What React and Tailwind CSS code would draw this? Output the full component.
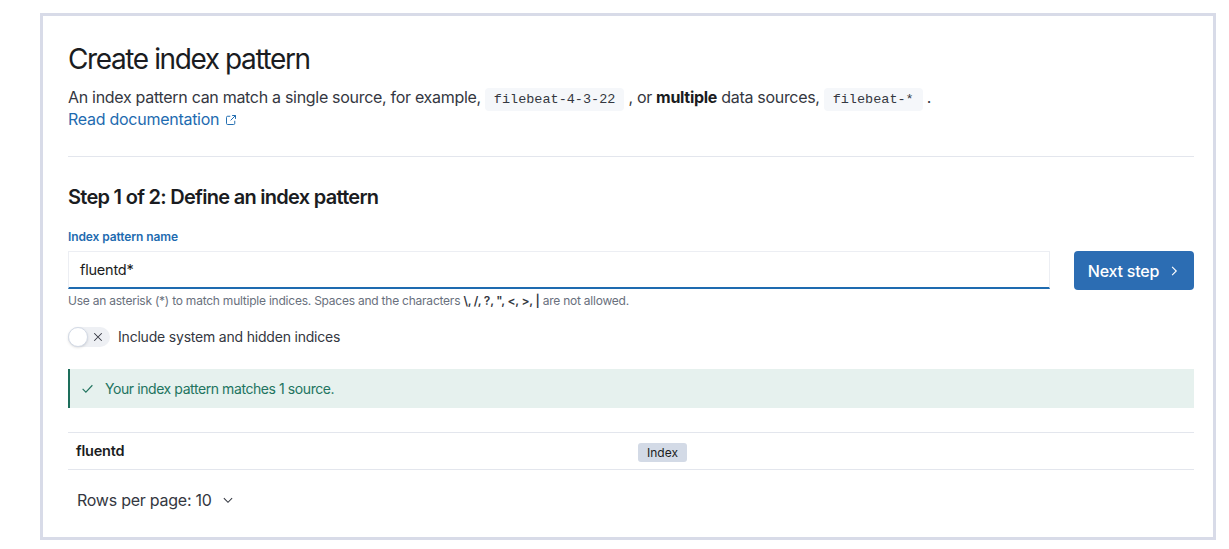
import React from 'react';

const sans = { fontFamily: 'Inter, "Noto Sans", sans-serif' };

const ExternalIcon = () => (
  <svg width="12" height="12" viewBox="0 0 16 16" fill="none" stroke="currentColor" strokeWidth="1.3" className="inline-block ml-1.5 -mt-0.5">
    <path d="M7 3H3.5A1.5 1.5 0 0 0 2 4.5v8A1.5 1.5 0 0 0 3.5 14h8a1.5 1.5 0 0 0 1.5-1.5V9" />
    <path d="M9.5 2H14v4.5M14 2 7.5 8.5" />
  </svg>
);

const Code = ({ children }) => (
  <code className="mx-1 rounded-sm bg-[#f5f7fa] px-[9px] py-[4px] text-[13.5px] leading-[16px] tracking-normal text-[#343741]" style={{ fontFamily: '"Liberation Mono", "DejaVu Sans Mono", monospace' }}>
    {children}
  </code>
);

export default function App() {
  return (
    <div className="min-h-[549px] bg-white pt-[13px] pl-[40px] text-[#1a1c21]" style={sans}>
      <div className="h-[527px] w-[1176px] border-[3px] border-[#d8dbe8] bg-white pl-[25px] pr-[19px] pt-[25px]">
        {/* header */}
        <h1 className="text-[28px] font-normal leading-[36px] tracking-[-1.4px] text-[#1a1c21]">Create index pattern</h1>
        <p className="mt-[8px] text-[16px] leading-[24px] tracking-[-0.3px] text-[#343741]">
          An index pattern can match a single source, for example,<Code>filebeat-4-3-22</Code>, or <strong className="font-bold text-[#1a1c21]">multiple</strong> data sources,<Code>filebeat-*</Code>.
        </p>
        <a className="-mt-[1px] block text-[16px] leading-[22px] tracking-[-0.27px] text-[#1e6bb0]">
          Read documentation
          <ExternalIcon />
        </a>

        <div className="mt-[26px] h-px bg-[#e3e6ed]" />

        {/* step 1 */}
        <h2 className="mt-[26px] text-[20px] font-semibold leading-[28px] tracking-[-0.72px]">Step 1 of 2: Define an index pattern</h2>

        <div className="mt-[17px] flex items-start gap-[24px]">
          <div className="flex-1">
            <label className="block text-[12px] font-semibold leading-[18px] tracking-[-0.1px] text-[#1e6bb0]">Index pattern name</label>
            <div className="mt-[5px] flex h-[38px] items-center border border-[#eceef3] border-b-[2px] border-b-[#1e6bb0] bg-white px-[11px] text-[14.5px] tracking-[-0.2px] text-[#1a1c21]">
              fluentd*
            </div>
            <p className="mt-[3px] text-[12px] leading-[18px] tracking-[-0.23px] text-[#69707d]">
              Use an asterisk (*) to match multiple indices. Spaces and the characters{' '}
              <b className="font-semibold text-[#343741]">\, /, ?, ", &lt;, &gt;, |</b> are not allowed.
            </p>
          </div>
          <button className="mt-[23px] flex h-[39px] w-[120px] items-center justify-center gap-[9px] rounded-[4px] bg-[#2c6db3] text-[16px] font-medium tracking-[-0.2px] text-white">
            Next step
            <svg width="12" height="12" viewBox="0 0 16 16" fill="none" stroke="currentColor" strokeWidth="1.5">
              <path d="M5.5 2.5 11 8l-5.5 5.5" />
            </svg>
          </button>
        </div>

        {/* toggle */}
        <div className="mt-[16px] flex items-center gap-[8px]">
          <div className="relative h-[20px] w-[42px] rounded-full bg-[#eef0f4]">
            <div className="absolute left-0 top-0 h-[20px] w-[20px] rounded-full border border-[#d3dae6] bg-white shadow-sm" />
            <svg className="absolute right-[6px] top-[4px]" width="12" height="12" viewBox="0 0 16 16" stroke="#343741" strokeWidth="1.4">
              <path d="M3 3l10 10M13 3 3 13" />
            </svg>
          </div>
          <span className="text-[14px] leading-[22px] tracking-[-0.2px] text-[#343741]">Include system and hidden indices</span>
        </div>

        {/* callout */}
        <div className="mt-[21px] flex h-[39px] items-center gap-[11px] border-l-[2px] border-[#1d6e5b] bg-[#e6f1ee] pl-[11px] text-[14px] tracking-[-0.42px] text-[#22745f]">
          <svg width="13" height="13" viewBox="0 0 16 16" fill="none" stroke="currentColor" strokeWidth="1.4">
            <path d="M2 8.5 6 12.5 14 4" />
          </svg>
          Your index pattern matches 1 source.
        </div>

        {/* table */}
        <div className="mt-[24px] border-y border-[#e3e6ed]">
          <div className="flex h-[36px] items-center">
            <div className="w-1/2 px-[8px] text-[14.5px] font-semibold tracking-[-0.2px]">fluentd</div>
            <div className="w-1/2 px-[7px]">
              <span className="inline-block rounded-[3px] bg-[#d3dae6] px-[9px] py-[1px] text-[12px] leading-[17px] text-[#1a1c21]">Index</span>
            </div>
          </div>
        </div>

        <div className="mt-[18px] flex items-center gap-[10px] pl-[9px] text-[16px] tracking-[-0.25px] text-[#343741]">
          Rows per page: 10
          <svg width="12" height="12" viewBox="0 0 16 16" fill="none" stroke="currentColor" strokeWidth="1.4">
            <path d="M2.5 5.5 8 11l5.5-5.5" />
          </svg>
        </div>
      </div>
    </div>
  );
}
